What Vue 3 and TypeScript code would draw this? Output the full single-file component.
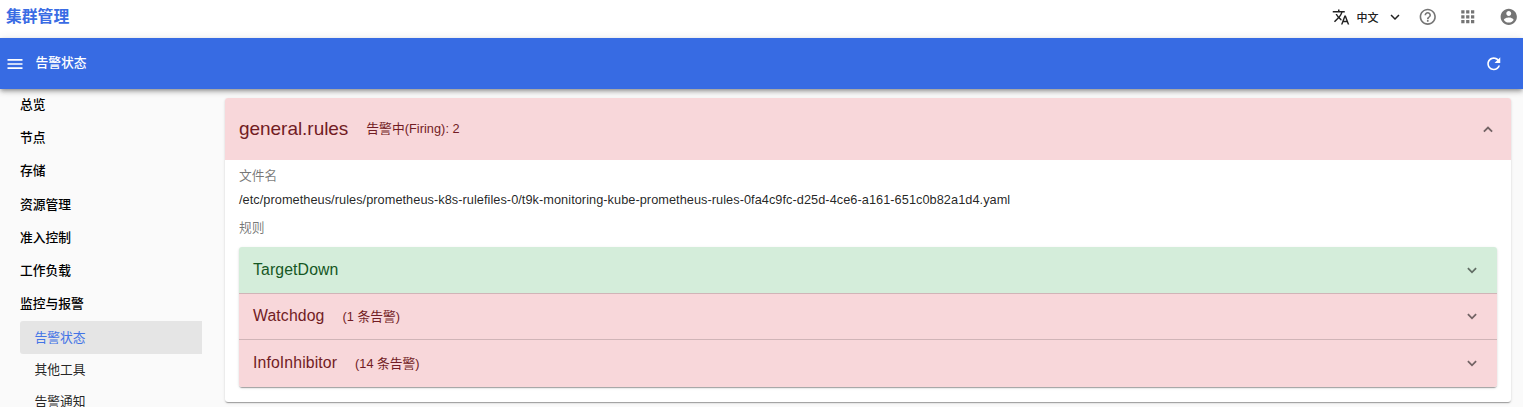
<script setup lang="ts">
interface Rule {
  name: string
  count?: string
  firing: boolean
}

const sections: string[] = ['总览', '节点', '存储', '资源管理', '准入控制', '工作负载', '监控与报警']
const children: string[] = ['告警状态', '其他工具', '告警通知']
const active = '告警状态'

const rules: Rule[] = [
  { name: 'TargetDown', firing: false },
  { name: 'Watchdog', count: '(1 条告警)', firing: true },
  { name: 'InfoInhibitor', count: '(14 条告警)', firing: true },
]
</script>

<template>
  <div class="page">
    <header class="topbar">
      <div class="brand">集群管理</div>
      <div class="tools">
        <div class="lang">
          <svg class="i-translate" viewBox="0 0 24 24"><path d="M12.87 15.07l-2.54-2.51.03-.03c1.74-1.94 2.98-4.17 3.71-6.53H17V4h-7V2H8v2H1v1.99h11.17C11.5 7.92 10.44 9.75 9 11.35 8.07 10.32 7.3 9.19 6.69 8h-2c.73 1.63 1.73 3.17 2.98 4.56l-5.09 5.02L4 19l5-5 3.11 3.11.76-2.04zM18.5 10h-2L12 22h2l1.12-3h4.75L21 22h2l-4.5-12zm-2.62 7l1.62-4.33L19.12 17h-3.24z" /></svg>
          <span>中文</span>
          <svg class="i-more" viewBox="0 0 24 24"><path d="M16.59 8.59L12 13.17 7.41 8.59 6 10l6 6 6-6z" /></svg>
        </div>
        <svg class="icon" viewBox="0 0 24 24"><path d="M11 18h2v-2h-2v2zm1-16C6.48 2 2 6.48 2 12s4.48 10 10 10 10-4.48 10-10S17.52 2 12 2zm0 18c-4.41 0-8-3.59-8-8s3.59-8 8-8 8 3.59 8 8-3.59 8-8 8zm0-14c-2.21 0-4 1.79-4 4h2c0-1.1.9-2 2-2s2 .9 2 2c0 2-3 1.75-3 5h2c0-2.25 3-2.5 3-5 0-2.21-1.79-4-4-4z" /></svg>
        <svg class="icon" viewBox="0 0 24 24"><path d="M4 8h4V4H4v4zm6 12h4v-4h-4v4zm-6 0h4v-4H4v4zm0-6h4v-4H4v4zm6 0h4v-4h-4v4zm6-10v4h4V4h-4zm-6 4h4V4h-4v4zm6 6h4v-4h-4v4zm0 6h4v-4h-4v4z" /></svg>
        <svg class="icon" viewBox="0 0 24 24"><path d="M12 2C6.48 2 2 6.48 2 12s4.48 10 10 10 10-4.48 10-10S17.52 2 12 2zm0 3c1.66 0 3 1.34 3 3s-1.34 3-3 3-3-1.34-3-3 1.34-3 3-3zm0 14.2c-2.5 0-4.71-1.28-6-3.22.03-1.99 4-3.08 6-3.08 1.99 0 5.97 1.09 6 3.08-1.29 1.94-3.5 3.22-6 3.22z" /></svg>
      </div>
    </header>

    <div class="toolbar">
      <svg class="i-menu" viewBox="0 0 24 24"><path d="M3 18h18v-2H3v2zm0-5h18v-2H3v2zm0-7v2h18V6H3z" /></svg>
      <h1>告警状态</h1>
      <svg class="i-refresh" viewBox="0 0 24 24"><path d="M17.65 6.35C16.2 4.9 14.21 4 12 4c-4.42 0-7.99 3.58-7.99 8s3.57 8 7.99 8c3.73 0 6.84-2.55 7.73-6h-2.08c-.82 2.33-3.04 4-5.65 4-3.31 0-6-2.69-6-6s2.69-6 6-6c1.66 0 3.14.69 4.22 1.78L13 11h7V4l-2.35 2.35z" /></svg>
    </div>

    <div class="body">
      <nav class="side">
        <div v-for="s in sections" :key="s" class="section">{{ s }}</div>
        <div class="children">
          <div v-for="c in children" :key="c" class="child" :class="{ active: c === active }">{{ c }}</div>
        </div>
      </nav>

      <main class="card">
        <div class="card-head">
          <span class="title">general.rules</span>
          <span class="status">告警中(Firing): 2</span>
          <svg class="chev" viewBox="0 0 10 7"><path d="M0.9 5.7L5 1.6l4.1 4.1" /></svg>
        </div>
        <div class="card-body">
          <div class="label">文件名</div>
          <div class="path">/etc/prometheus/rules/prometheus-k8s-rulefiles-0/t9k-monitoring-kube-prometheus-rules-0fa4c9fc-d25d-4ce6-a161-651c0b82a1d4.yaml</div>
          <div class="label second">规则</div>
          <div class="rules">
            <div v-for="r in rules" :key="r.name" class="rule" :class="r.firing ? 'firing' : 'ok'">
              <span class="name">{{ r.name }}</span>
              <span v-if="r.count" class="count">{{ r.count }}</span>
              <svg class="chev" viewBox="0 0 10 7"><path d="M0.9 1.2L5 5.3l4.1-4.1" /></svg>
            </div>
          </div>
        </div>
      </main>
    </div>
  </div>
</template>

<style>
body {
  overflow: hidden;
}
</style>

<style scoped>
.page {
  height: 407px;
  overflow: hidden;
  display: flex;
  flex-direction: column;
  background: #fafafa;
  color: rgba(0, 0, 0, 0.87);
  font-family: "Liberation Sans", "Noto Sans CJK SC", sans-serif;
  font-size: 12.75px;
}
.page * {
  box-sizing: border-box;
}
svg {
  display: block;
  flex: none;
  fill: currentColor;
}
.topbar {
  height: 38px;
  flex: none;
  display: flex;
  justify-content: space-between;
  background: #fff;
  padding: 0 5px 5px 6px;
}
.brand {
  color: #3a6ce4;
  font-size: 15.8px;
  font-weight: 700;
  line-height: 33px;
}
.tools {
  display: flex;
  align-items: center;
  gap: 21px;
  color: #757575;
}
.lang {
  display: flex;
  align-items: center;
  color: #212121;
  font-size: 11px;
  font-weight: 500;
  margin-right: -7px;
}
.i-translate {
  width: 18px;
  height: 18px;
  margin-right: 7px;
}
.i-more {
  width: 18px;
  height: 18px;
  margin-left: 7px;
}
.icon {
  width: 19.5px;
  height: 19.5px;
}
.toolbar {
  position: relative;
  z-index: 1;
  height: 51px;
  flex: none;
  display: flex;
  align-items: center;
  padding: 0 20px 0 5px;
  background: #376be3;
  color: #fff;
  box-shadow: 0 2px 4px -1px rgba(0, 0, 0, 0.3), 0 3px 5px rgba(0, 0, 0, 0.16), 0 1px 9px rgba(0, 0, 0, 0.1);
}
.i-menu {
  width: 20px;
  height: 20px;
}
h1 {
  margin: 0 0 4px 10.4px;
  flex: 1;
  font-size: 12.75px;
  font-weight: 500;
}
.i-refresh {
  width: 19.5px;
  height: 19.5px;
}
.body {
  flex: 1;
  min-height: 0;
  display: flex;
  align-items: flex-start;
}
.side {
  width: 225px;
  flex: none;
  padding: 0 23px 0 20px;
  margin-top: -1px;
}
.section {
  height: 33.2px;
  line-height: 33px;
  font-weight: 500;
  color: #000;
}
.children {
  margin-top: 0.6px;
}
.child {
  height: 32px;
  line-height: 31px;
  padding-left: 14.5px;
}
.child.active {
  height: 33px;
  line-height: 33px;
  background: #e5e5e5;
  border-radius: 3px 0 0 3px;
  color: #4374e6;
}
.card {
  width: 1286px;
  height: 304px;
  margin-top: 9px;
  background: #fff;
  border-radius: 3px;
  box-shadow: 0 2px 1px -1px rgba(0, 0, 0, 0.2), 0 1px 1px rgba(0, 0, 0, 0.14), 0 1px 3px rgba(0, 0, 0, 0.12);
}
.card-head {
  height: 62px;
  display: flex;
  align-items: center;
  padding: 0 18.5px 0 14px;
  background: #f8d7da;
  color: #721c24;
  border-radius: 3px 3px 0 0;
}
.title {
  font-size: 19px;
  letter-spacing: -0.04px;
  margin-right: 18px;
}
.status {
  font-size: 12.75px;
  letter-spacing: 0.04px;
  padding-bottom: 3px;
}
.chev {
  width: 10px;
  height: 7px;
  margin-left: auto;
  fill: none;
  stroke: rgba(0, 0, 0, 0.54);
  stroke-width: 1.8;
}
.card-body {
  padding: 7px 14px 0;
}
.label {
  height: 18px;
  line-height: 18px;
  color: rgba(0, 0, 0, 0.54);
}
.path {
  height: 18px;
  line-height: 18px;
  margin-top: 6px;
  font-size: 12.75px;
  letter-spacing: 0.046px;
  white-space: nowrap;
}
.second {
  margin-top: 10px;
}
.rules {
  margin-top: 10px;
  border-radius: 3px;
  box-shadow: 0 2px 1px -1px rgba(0, 0, 0, 0.2), 0 1px 1px rgba(0, 0, 0, 0.14), 0 1px 3px rgba(0, 0, 0, 0.12);
}
.rule {
  height: 46px;
  display: flex;
  align-items: center;
  padding: 0 20px 0 14px;
}
.rule + .rule {
  border-top: 1px solid rgba(0, 0, 0, 0.16);
}
.rule:first-child {
  border-radius: 3px 3px 0 0;
}
.rule:last-child {
  height: 48px;
  border-radius: 0 0 3px 3px;
}
.name {
  font-size: 15.8px;
  letter-spacing: 0.12px;
  margin-right: 18px;
}
.firing .name {
  padding-bottom: 2px;
}
.count {
  padding-bottom: 2px;
}
.rule:last-child .count {
  padding-bottom: 3px;
}
.ok {
  background: #d4edda;
  color: #155724;
}
.firing {
  background: #f8d7da;
  color: #721c24;
}
</style>
